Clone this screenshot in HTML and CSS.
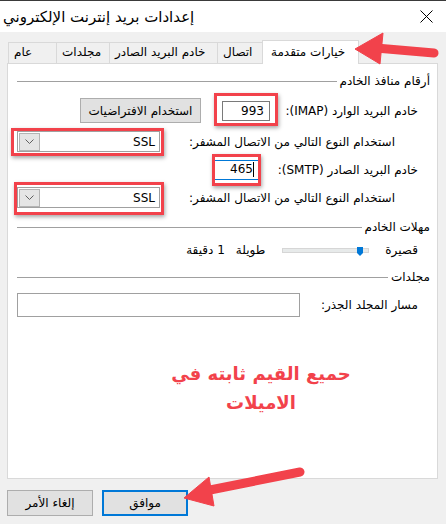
FILE: index.html
```html
<!DOCTYPE html>
<html lang="ar">
<head>
<meta charset="utf-8">
<title>إعدادات بريد إنترنت الإلكتروني</title>
<link rel="stylesheet" href="styles.css">
</head>
<body>
<div class="window">
  <div class="titlebar">
    <span class="title">إعدادات بريد إنترنت الإلكتروني</span>
    <svg class="close" width="13" height="13" viewBox="0 0 13 13"><path d="M0.5 0.5L12.5 12.5M12.5 0.5L0.5 12.5" stroke="#000" stroke-width="1" fill="none"/></svg>
  </div>
  <div class="tabs">
    <div class="tab t1">عام</div>
    <div class="tab t2">مجلدات</div>
    <div class="tab t3">خادم البريد الصادر</div>
    <div class="tab t4">اتصال</div>
    <div class="tab active t5">خيارات متقدمة</div>
  </div>
  <div class="panel" dir="rtl">
    <div class="group-head g1"><span>أرقام منافذ الخادم</span><i></i></div>
    <div class="row r1">
      <span class="label imap">خادم البريد الوارد (IMAP):</span>
      <span class="field port mark m1">993</span>
      <span class="btn defaults">استخدام الافتراضيات</span>
    </div>
    <div class="row split r2">
      <span class="label indent">استخدام النوع التالي من الاتصال المشفر:</span>
      <span class="combo mark m2"><span class="combo-val">SSL</span><span class="combo-arrow"><svg width="9" height="5" viewBox="0 0 9 5"><path d="M0.5 0.5L4.5 4.5L8.5 0.5" stroke="#606060" fill="none"/></svg></span></span>
    </div>
    <div class="row r3">
      <span class="label smtp">خادم البريد الصادر (SMTP):</span>
      <span class="field port focus mark m3"><span class="caret">465</span></span>
    </div>
    <div class="row split r4">
      <span class="label indent">استخدام النوع التالي من الاتصال المشفر:</span>
      <span class="combo mark m4"><span class="combo-val">SSL</span><span class="combo-arrow"><svg width="9" height="5" viewBox="0 0 9 5"><path d="M0.5 0.5L4.5 4.5L8.5 0.5" stroke="#606060" fill="none"/></svg></span></span>
    </div>
    <div class="group-head g2"><span>مهلات الخادم</span><i></i></div>
    <div class="row slider-row">
      <span class="label">قصيرة</span>
      <span class="slider"><span class="thumb"><svg width="6" height="9" viewBox="0 0 6 9"><path d="M0 0H6V6L3 9L0 6Z" fill="#0078d7"/></svg></span></span>
      <span class="label long">طويلة</span>
      <span class="label minute">1 دقيقة</span>
    </div>
    <div class="group-head g3"><span>مجلدات</span><i></i></div>
    <div class="row split r5">
      <span class="label">مسار المجلد الجذر:</span>
      <span class="field path"></span>
    </div>
    <div class="note">حميع القيم ثابته في الاميلات</div>
  </div>
  <div class="buttons">
    <span class="btn cancel">إلغاء الأمر</span>
    <span class="btn ok">موافق</span>
  </div>
</div>
<svg class="arrows" width="446" height="524" viewBox="0 0 446 524">
  <g fill="#f2424b" stroke="#f2424b">
    <line x1="376" y1="48" x2="434" y2="53" stroke-width="9" stroke-linecap="round"/>
    <polygon points="355,49 383,33 380,64" stroke-width="1" stroke-linejoin="round"/>
    <line x1="205" y1="491" x2="300" y2="472" stroke-width="9" stroke-linecap="round"/>
    <polygon points="184,498 209,477 214,506" stroke-width="1" stroke-linejoin="round"/>
  </g>
</svg>
</body>
</html>
```
FILE: styles.css
```css
* { box-sizing: border-box; margin: 0; padding: 0; }
html, body { width: 446px; height: 524px; overflow: hidden; }
body {
  background: #f0f0f0;
  font-family: "DejaVu Sans", sans-serif;
  font-size: 12px;
  color: #000;
  position: relative;
}
.window { display: flex; flex-direction: column; height: 524px; }

.titlebar {
  height: 32px;
  background: #fff;
  border-top: 1px solid #3a3a3a;
  display: flex;
  align-items: center;
  justify-content: space-between;
  padding: 0 13px 0 3px;
}
.title { font-size: 15px; line-height: 20px; white-space: nowrap; }
.close { display: block; }

.tabs {
  display: flex;
  align-items: flex-end;
  height: 24px;
  margin-top: 8px;
  padding-left: 8px;
  position: relative;
  z-index: 2;
}
.tab {
  height: 21px;
  margin-bottom: 1px;
  background: #f0f0f0;
  border: 1px solid #d9d9d9;
  border-bottom: none;
  border-right: none;
  padding-left: 5px;
  line-height: 19px;
  white-space: nowrap;
}
.t1 { width: 48px; }
.t2 { width: 53px; }
.t3 { width: 108px; }
.t4 { width: 46px; border-right: 1px solid #d9d9d9; }
.tab.active {
  height: 24px;
  margin-bottom: 0;
  margin-left: -1px;
  width: 97px;
  background: #fff;
  border-right: 1px solid #d9d9d9;
  padding-left: 8px;
  line-height: 22px;
}

.panel {
  margin: -1px 8px 0 7px;
  height: 416px;
  background: #fff;
  border: 1px solid #d9d9d9;
  position: relative;
  z-index: 1;
}

.group-head {
  display: flex;
  align-items: center;
  gap: 3px;
  height: 16px;
  padding: 0 7px 0 9px;
  white-space: nowrap;
}
.group-head i { flex: 1; height: 1px; background: #a0a0a0; }
.g1 { margin-top: 9px; }
.g2 { margin-top: 11px; }
.g3 { margin-top: 11px; }

.row {
  display: flex;
  align-items: center;
  padding: 0 19px 0 9px;
  white-space: nowrap;
}
.row.split { justify-content: space-between; }
.r1 { margin-top: 9px; height: 25px; }
.r2 { margin-top: 8px; height: 21px; }
.r3 { margin-top: 7px; height: 21px; }
.r4 { margin-top: 7px; height: 21px; }
.slider-row { margin-top: 7px; height: 16px; }
.r5 { margin-top: 8px; height: 24px; }

.label { line-height: 16px; }
.label.imap { flex: none; width: 135px; }
.label.smtp { flex: none; width: 145px; }
.label.indent { margin-right: 23px; }

.field {
  display: flex;
  align-items: center;
  background: #fff;
  border: 1px solid #7a7a7a;
}
.port {
  width: 48px;
  height: 20px;
  margin-right: 13px;
  padding-right: 5px;
  direction: ltr;
  justify-content: flex-end;
}
.port.focus { border-color: #0078d7; }
.caret { border-right: 1px solid #000; padding-right: 0; line-height: 15px; }
.path { width: 283px; height: 24px; border-color: #a0a0a0; }

.btn {
  display: flex;
  align-items: center;
  justify-content: center;
  background: #e1e1e1;
  border: 1px solid #adadad;
  white-space: nowrap;
}
.defaults { width: 121px; height: 25px; margin-right: 21px; }

.combo {
  width: 143px;
  height: 21px;
  display: flex;
  align-items: center;
  justify-content: space-between;
  border: 1px solid #a0a0a0;
  background: #fff;
  padding: 0 4px 0 1px;
}
.combo-val { direction: ltr; }
.combo-arrow {
  width: 21px;
  height: 18px;
  background: #e5e5e5;
  border: 1px solid #b4b4b4;
  display: flex;
  align-items: center;
  justify-content: center;
}
.combo-arrow svg { display: block; }

.mark { position: relative; }
.mark::after {
  content: "";
  position: absolute;
  border: 3px solid #f2424b;
  box-shadow: 1px 2px 4px rgba(0, 0, 0, 0.35);
  pointer-events: none;
}
.m1::after { top: -9px; bottom: -6px; left: -9px; right: -9px; }
.m2::after { top: -4px; bottom: -5px; left: -7px; right: -5px; }
.m3::after { top: -7px; bottom: -7px; left: -1px; right: -2px; }
.m4::after { top: -6px; bottom: -8px; left: -4px; right: -5px; }

.slider {
  position: relative;
  width: 87px;
  height: 5px;
  margin-right: 16px;
  background: #e7eaea;
  border: 1px solid #d6d6d6;
}
.thumb { position: absolute; left: 74px; top: -2px; }
.thumb svg { display: block; }
.long { margin-right: 17px; }
.minute { margin-right: 11px; }

.note {
  margin: 42px 81px 0 0;
  width: 190px;
  text-align: center;
  color: #f2424b;
  font-weight: bold;
  font-size: 18px;
  line-height: 29px;
}

.buttons {
  display: flex;
  gap: 9px;
  margin-top: 11px;
  padding-left: 7px;
}
.cancel, .ok { width: 86px; height: 26px; }
.ok { border: 2px solid #0078d7; }

.arrows {
  position: absolute;
  top: 0;
  left: 0;
  pointer-events: none;
  z-index: 5;
}
```
